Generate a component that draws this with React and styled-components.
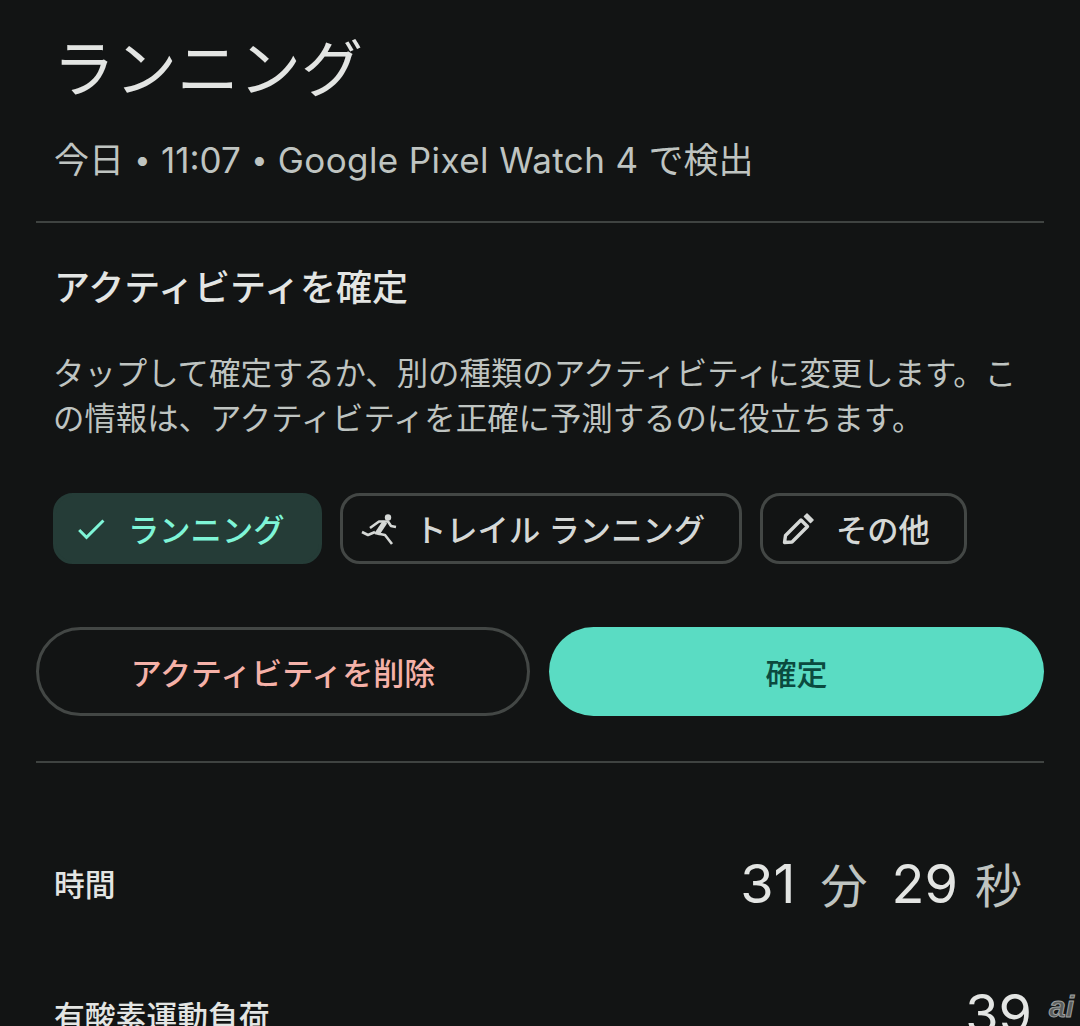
import styled, { createGlobalStyle } from 'styled-components'
import { MdCheck } from 'react-icons/md'

const Global = createGlobalStyle`
  html, body { margin: 0; padding: 0; background: #121414; }
  body { font-family: "Inter", "Noto Sans CJK JP", sans-serif; }
`

const RunIcon = () => (
  <svg width="38" height="32" viewBox="0 0 38 32" fill="none">
    <circle cx="28" cy="4.5" r="3.2" fill="currentColor" />
    <path d="M2 19 L8 22 L15 19 M15 20 L25 22 L32 31" stroke="currentColor" strokeWidth="2.6" strokeLinejoin="round" />
    <path d="M10 15 L19 8.5 L28 8.5 L31 13 L36 14" stroke="currentColor" strokeWidth="2.6" strokeLinejoin="round" />
    <path d="M25 9 L17 21" stroke="currentColor" strokeWidth="5" />
  </svg>
)

const PencilIcon = () => (
  <svg width="34" height="34" viewBox="0 0 34 34" fill="none">
    <path d="M3.5 30.5 L4.5 23.5 L20 8 L26.5 14.5 L11 30 Z" stroke="currentColor" strokeWidth="3.4" strokeLinejoin="round" />
    <path d="M23.5 4.5 L26 2 L32 8 L29.5 10.5 Z" fill="currentColor" stroke="currentColor" strokeWidth="1.6" strokeLinejoin="round" />
  </svg>
)

function App() {
  return (
    <Page>
      <Global />
      <Header>
        <Title>ランニング</Title>
        <Sub>今日<Dot>•</Dot>11:07<Dot>•</Dot><Latin>Google Pixel Watch 4</Latin> で検出</Sub>
      </Header>
      <Divider />
      <Confirm>
        <Heading>アクティビティを確定</Heading>
        <Body>タップして確定するか、別の種類のアクティビティに変更します。この情報は、アクティビティを正確に予測するのに役立ちます。</Body>
        <Chips>
          <Chip $active $w={269} $pad={17} $gap={19}><MdCheck size={36} /><span>ランニング</span></Chip>
          <Chip $w={402} $pad={17} $gap={17}><RunIcon /><span>トレイル ランニング</span></Chip>
          <Chip $w={207} $pad={18} $gap={21}><PencilIcon /><span>その他</span></Chip>
        </Chips>
      </Confirm>
      <Buttons>
        <Outline>アクティビティを削除</Outline>
        <Primary>確定</Primary>
      </Buttons>
      <Divider />
      <Stat $top={77} $right={22}>
        <Label>時間</Label>
        <Value>31<Unit $l={25} $r={24}>分</Unit>29<Unit $l={17} $r={0}>秒</Unit></Value>
      </Stat>
      <Stat $top={40} $right={12}>
        <Label $drop={6}>有酸素運動負荷</Label>
        <Value>39</Value>
      </Stat>
      <Mark>ai</Mark>
    </Page>
  )
}

const Page = styled.div`
  position: relative;
  width: 1080px;
  height: 1026px;
  overflow: hidden;
  box-sizing: border-box;
  padding: 0 36px;
  background: #121414;
  color: #e3e5e3;
`
const Header = styled.div`
  padding: 27px 18px 0;
  height: 221px;
  box-sizing: border-box;
`
const Title = styled.h1`
  margin: 0 0 0 -1px;
  font-size: 62px;
  line-height: 86px;
  font-weight: 400;
`
const Sub = styled.div`
  margin-top: 25px;
  font-size: 35px;
  line-height: 44px;
  color: #bfc4c1;
  white-space: nowrap;
`
const Dot = styled.span`
  display: inline-block;
  width: 37px;
  text-align: center;
  font-size: 29px;
  vertical-align: 3px;
`
const Latin = styled.span`
  letter-spacing: 0.4px;
`
const Divider = styled.div`
  height: 2px;
  background: #3f4341;
`
const Confirm = styled.div`
  padding: 0 18px;
`
const Heading = styled.h2`
  margin: 42px 0 0;
  font-size: 36px;
  line-height: 46px;
  font-weight: 500;
  color: #e3e5e3;
`
const Body = styled.p`
  margin: 41px 0 0 -1px;
  font-size: 31.4px;
  line-height: 45px;
  color: #bfc4c1;
`
const Chips = styled.div`
  display: flex;
  gap: 18px;
  margin: 51px 0 0 -1px;
`
const Chip = styled.div`
  display: flex;
  align-items: center;
  gap: ${p => p.$gap}px;
  box-sizing: border-box;
  width: ${p => p.$w}px;
  height: 71px;
  padding-left: ${p => p.$pad}px;
  border-radius: 20px;
  font-size: 31.3px;
  font-weight: 500;
  white-space: nowrap;
  color: ${p => (p.$active ? '#7ff5d7' : '#d5d8d6')};
  background: ${p => (p.$active ? '#253c37' : 'transparent')};
  border: 3px solid ${p => (p.$active ? '#253c37' : '#434745')};
`
const Buttons = styled.div`
  display: grid;
  grid-template-columns: 494px 495px;
  gap: 19px;
  margin: 63px 0 45px;
`
const Outline = styled.div`
  display: flex;
  align-items: center;
  justify-content: center;
  box-sizing: border-box;
  height: 89px;
  border-radius: 45px;
  border: 3px solid #434745;
  font-size: 31px;
  font-weight: 500;
  color: #f5b1a8;
`
const Primary = styled(Outline)`
  border: none;
  background: #5adcc3;
  color: #0b4a3f;
`
const Stat = styled.div`
  display: flex;
  justify-content: space-between;
  align-items: center;
  margin-top: ${p => p.$top}px;
  padding: 0 ${p => p.$right}px 0 18px;
`
const Label = styled.div`
  font-size: 30.8px;
  line-height: 46px;
  font-weight: 500;
  color: #e3e5e3;
  margin-top: ${p => p.$drop || 0}px;
`
const Value = styled.div`
  font-size: 54px;
  line-height: 88px;
  color: #e3e5e3;
`
const Unit = styled.span`
  font-size: 47px;
  margin: 0 ${p => p.$r}px 0 ${p => p.$l}px;
  color: #bfc4c1;
`
const Mark = styled.div`
  position: absolute;
  right: 6px;
  bottom: 2px;
  font: italic bold 30px "Liberation Sans", sans-serif;
  color: #5a5d5c;
  -webkit-text-stroke: 1px #a0a3a2;
`

export default App
